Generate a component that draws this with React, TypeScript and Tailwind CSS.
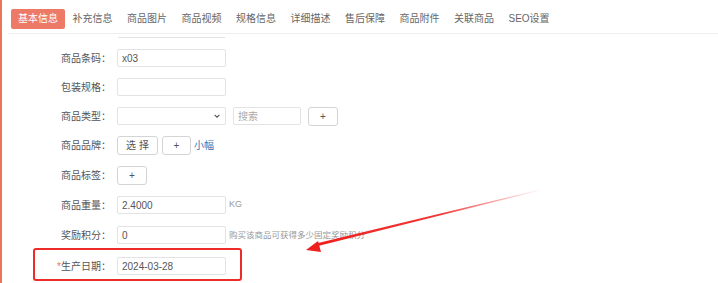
const font = "font-['Liberation_Sans','Noto_Sans_CJK_SC',sans-serif]";

const tabs = ["基本信息", "补充信息", "商品图片", "商品视频", "规格信息", "详细描述", "售后保障", "商品附件", "关联商品", "SEO设置"];

const Label = ({ children, w = "w-[109px]" }: { children: React.ReactNode; w?: string }) => (
  <div className={`${w} shrink-0 text-right text-[10px] text-[#555]`}>{children}</div>
);

const Input = ({ value = "", placeholder = "", w = "w-[109px]" }: { value?: string; placeholder?: string; w?: string }) => (
  <div className={`${w} h-[18px] shrink-0 border border-[#e3e3e3] rounded-[2px] px-[4px] flex items-center text-[10px]`}>
    {value ? <span className="text-[#555]">{value}</span> : <span className="text-[#aaa]">{placeholder}</span>}
  </div>
);

const Btn = ({ children, w }: { children: React.ReactNode; w: string }) => (
  <div className={`${w} h-[19px] shrink-0 border border-[#d4d4d4] rounded-[3px] flex items-center justify-center text-[10px] text-[#555]`}>
    {children}
  </div>
);

const Row = ({ children, className = "" }: { children: React.ReactNode; className?: string }) => (
  <div className={`flex items-center h-[18px] ${className}`}>{children}</div>
);

export default function App() {
  return (
    <div className={`relative w-[718px] h-[283px] overflow-hidden bg-white border-l-2 border-[#e8775a] ${font}`}>
      {/* tabs */}
      <div className="ml-[6px] pl-[3px] pt-[9px] pb-[4px] border-b border-[#eeeeee] flex gap-[0.5px]">
        {tabs.map((t, i) => (
          <div
            key={t}
            className={`h-[20px] px-[7px] leading-[20px] text-[10px] rounded-[2px] ${
              i === 0 ? "bg-[#ec7a66] text-white" : "text-[#666]"
            }`}
          >
            {t}
          </div>
        ))}
      </div>

      {/* bottom of a field scrolled off */}
      <div className="ml-[116px] w-[107px] h-[4px] border-b border-[#e3e3e3]" />

      <div className="pt-[11px] flex flex-col gap-[11px]">
        <Row>
          <Label>商品条码：</Label>
          <div className="ml-[6px]"><Input value="x03" /></div>
        </Row>
        <Row>
          <Label>包装规格：</Label>
          <div className="ml-[6px]"><Input /></div>
        </Row>
        <Row>
          <Label>商品类型：</Label>
          <div className="ml-[6px] w-[109px] h-[18px] border border-[#e3e3e3] rounded-[2px] flex items-center justify-end pr-[4px]">
            <svg width="8" height="8" viewBox="0 0 10 10">
              <path d="M2 3.5 L5 6.5 L8 3.5" fill="none" stroke="#555" strokeWidth="1.3" />
            </svg>
          </div>
          <div className="ml-[7px]"><Input placeholder="搜索" w="w-[68px]" /></div>
          <div className="ml-[7px]"><Btn w="w-[30px]">+</Btn></div>
        </Row>
        <Row className="h-[19px]">
          <Label>商品品牌：</Label>
          <div className="ml-[6px]"><Btn w="w-[41px]">选 择</Btn></div>
          <div className="ml-[4px]"><Btn w="w-[29px]">+</Btn></div>
          <span className="ml-[3px] text-[10px] text-[#2b73b8]">小幅</span>
        </Row>
        <Row className="h-[19px]">
          <Label>商品标签：</Label>
          <div className="ml-[6px]"><Btn w="w-[30px]">+</Btn></div>
        </Row>
        <Row>
          <Label>商品重量：</Label>
          <div className="ml-[6px]"><Input value="2.4000" /></div>
          <span className="ml-[3px] text-[9px] text-[#999]">KG</span>
        </Row>
        <Row className="mt-[1px]">
          <Label>奖励积分：</Label>
          <div className="ml-[6px]"><Input value="0" /></div>
          <span className="ml-[3px] text-[8.5px] text-[#999] whitespace-nowrap">购买该商品可获得多少固定奖励积分</span>
        </Row>
      </div>

      <div className="mt-[4px] ml-[31px] w-[209px] h-[33px] border-2 border-[#ee2b2b] rounded-[3px] pt-[7px]">
        <Row>
          <Label w="w-[76px]">
            <span className="text-[#e8775a]">*</span>生产日期：
          </Label>
          <div className="ml-[6px]"><Input value="2024-03-28" /></div>
        </Row>
      </div>

      {/* annotation arrow */}
      <svg className="absolute left-0 top-0 pointer-events-none" width="718" height="283" viewBox="0 0 718 283">
        <defs>
          <linearGradient id="tail" gradientUnits="userSpaceOnUse" x1="312" y1="248" x2="540" y2="190">
            <stop offset="0" stopColor="#ef2020" stopOpacity="1" />
            <stop offset="0.55" stopColor="#ef2020" stopOpacity="0.9" />
            <stop offset="1" stopColor="#ef2020" stopOpacity="0" />
          </linearGradient>
        </defs>
        <path d="M314 246.5 L540 190 L540 189 L314 243.5 Z" fill="url(#tail)" />
        <path d="M304 250 L319 252 L316 241 Z" fill="#ef2020" />
      </svg>
    </div>
  );
}
